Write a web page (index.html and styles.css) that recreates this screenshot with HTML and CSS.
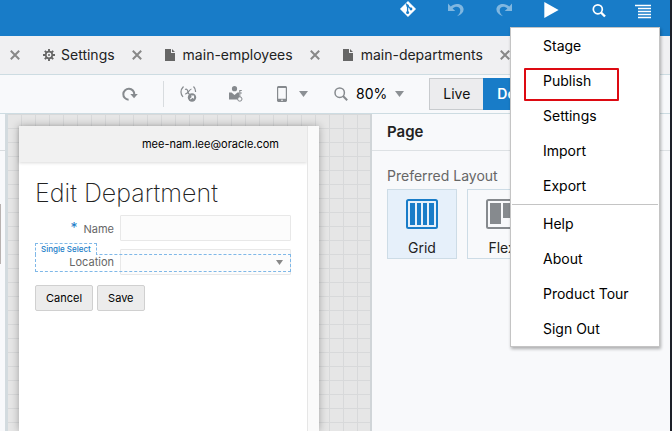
FILE: index.html
```html
<!DOCTYPE html>
<html lang="en">
<head>
<meta charset="utf-8">
<title>Edit Department</title>
<link rel="stylesheet" href="styles.css">
</head>
<body>
<div class="app">
  <header class="topbar">
    <div class="topbar-actions">
      <button class="icon-btn" aria-label="Git"><svg width="16" height="16" viewBox="0 0 16 16"><path d="M8 0.2 15.8 8 8 15.8 0.2 8Z" fill="#fff" stroke="#fff" stroke-width=".4" stroke-linejoin="round"/><path d="M6 2.6 7.6 4.4V11M7.6 4.8 10.8 7.9" fill="none" stroke="#187cc8" stroke-width="1.3"/><circle cx="7.6" cy="11.4" r="1.5" fill="#187cc8"/><circle cx="7.6" cy="4.8" r="1.3" fill="#187cc8"/><circle cx="11" cy="8" r="1.4" fill="#187cc8"/></svg></button>
      <button class="icon-btn faded" aria-label="Undo"><svg width="16" height="16" viewBox="0 0 16 16"><path d="M0 2.5V10h7.3L4.6 7.6C7.500 4.600 12.500 5.500 12.300 9.500C12.200 12 10.800 13.500 9 15.300C13.500 13.800 15.700 11 15.600 8C15.200 2.600 7 1 2.700 5.500Z" fill="#fff"/></svg></button>
      <button class="icon-btn faded" aria-label="Redo"><svg width="16" height="16" viewBox="0 0 16 16"><path transform="translate(16) scale(-1 1)" d="M0 2.500V10h7.300L4.600 7.600C7.500 4.600 12.500 5.500 12.300 9.500C12.200 12 10.800 13.500 9 15.300C13.500 13.800 15.700 11 15.600 8C15.200 2.600 7 1 2.700 5.500Z" fill="#fff"/></svg></button>
      <button class="icon-btn" aria-label="Run"><svg width="16" height="18" viewBox="0 0 16 18"><path d="M.3 1v16L14.600 9Z" fill="#fff"/></svg></button>
      <button class="icon-btn" aria-label="Search"><svg width="16" height="18" viewBox="0 0 16 18"><circle cx="5.800" cy="8.300" r="4.500" fill="none" stroke="#fff" stroke-width="1.700"/><path d="M9 11.500 13 15.500" stroke="#fff" stroke-width="2.400"/></svg></button>
    </div>
    <button class="icon-btn" aria-label="Menu"><svg width="16" height="18" viewBox="0 0 16 18"><path d="M0 4h16M3 7h13M3 10h13M3 13h13M3 16h13" transform="translate(0 .5)" stroke="#fff" stroke-width="1.700"/></svg></button>
  </header>

  <nav class="tabs">
    <button class="close" aria-label="Close tab"><svg width="10" height="10" viewBox="0 0 10 10"><path d="M.8.8 9.200 9.200M9.200.8.8 9.200"/></svg></button>
    <div class="tab"><a href="#settings"><svg class="tab-icon" width="12" height="12" viewBox="0 0 12 12"><circle cx="6" cy="6" r="3.300" fill="none" stroke="#666" stroke-width="1.700"/><circle cx="6" cy="6" r="1" fill="#666"/><path d="M6 0v2.500M6 9.500V12M0 6h2.500M9.500 6H12M1.800 1.800 3.500 3.500M8.500 8.500l1.700 1.700M10.200 1.800 8.500 3.500M3.500 8.500 1.800 10.200" stroke="#666" stroke-width="1.900"/></svg>Settings</a>
      <button class="close" aria-label="Close tab"><svg width="10" height="10" viewBox="0 0 10 10"><path d="M.8.8 9.200 9.200M9.200.8.8 9.200"/></svg></button></div>
    <div class="tab"><a href="#employees"><svg class="tab-icon file" width="10" height="12" viewBox="0 0 10 12"><path d="M0 0h6v4h4v8H0ZM7 0l3 3H7Z" fill="#666"/></svg>main-employees</a>
      <button class="close" aria-label="Close tab"><svg width="10" height="10" viewBox="0 0 10 10"><path d="M.8.8 9.200 9.200M9.200.8.8 9.200"/></svg></button></div>
    <div class="tab"><a href="#departments"><svg class="tab-icon file" width="10" height="12" viewBox="0 0 10 12"><path d="M0 0h6v4h4v8H0ZM7 0l3 3H7Z" fill="#666"/></svg>main-departments</a>
      <button class="close" aria-label="Close tab"><svg width="10" height="10" viewBox="0 0 10 10"><path d="M.8.8 9.200 9.200M9.200.8.8 9.200"/></svg></button></div>
  </nav>

  <div class="toolbar">
    <button class="icon-btn reload" aria-label="Reload"><svg width="16" height="16" viewBox="0 0 16 16"><path d="M6.600 13.700A5.500 5.500 0 1 1 12.300 8.500" fill="none" stroke="#868a8e" stroke-width="2"/><path d="M8.300 8h7.500L12 12.200Z" fill="#868a8e"/></svg></button>
    <div class="tool-group">
      <button class="icon-btn" aria-label="Variables"><svg width="18" height="18" viewBox="0 0 18 18"><path d="M3.500 1.500C.2 5 .2 8.500 3 12M13.500 1.500c1.500 1.500 2.200 3.500 2 5.500M5 4.500c2-1 2.500.5 3 2.500s1 2.500 2 2M11.500 4C9.500 4 7.500 9.500 5 9" fill="none" stroke="#868a8e" stroke-width="1.200"/><circle cx="12" cy="12.500" r="4.200" fill="#868a8e"/><path d="M10.300 14.200l3.200-3.200M11 11h2.500v2.500" fill="none" stroke="#f8f9fb" stroke-width="1.100"/></svg></button>
      <button class="icon-btn" aria-label="User access"><svg width="14" height="18" viewBox="0 0 14 18"><circle cx="5.500" cy="3.700" r="2.600" fill="#868a8e"/><path d="M0 7.500h2.500L5.500 10l3-2.500H10v7H0Z" fill="#868a8e"/><circle cx="10.800" cy="14" r="2.200" fill="#f8f9fb" stroke="#868a8e"/><path d="M10.800 12V5.500h2M10.800 8h2" fill="none" stroke="#868a8e" stroke-width="1.100"/></svg></button>
      <button class="icon-btn device" aria-label="Device"><svg width="10" height="16" viewBox="0 0 10 16"><path d="M1 0h8l1 1v14l-1 1H1l-1-1V1ZM1.200 2v10.700h7.600V2Z" fill-rule="evenodd" fill="#868a8e"/><circle cx="5" cy="14.300" r=".8" fill="#fff"/></svg><svg width="9" height="6" viewBox="0 0 9 6"><path d="M0 0h9L4.500 6Z" fill="#8c9094"/></svg></button>
      <button class="icon-btn zoom"><svg width="14" height="14" viewBox="0 0 14 14"><circle cx="5.700" cy="5.700" r="4.700" fill="none" stroke="#868a8e" stroke-width="1.500"/><path d="M9 9l4.200 4.200" stroke="#868a8e" stroke-width="2"/></svg><span>80%</span><svg width="9" height="6" viewBox="0 0 9 6"><path d="M0 0h9L4.500 6Z" fill="#8c9094"/></svg></button>
    </div>
    <div class="modes"><button class="mode">Live</button><button class="mode active">Design</button></div>
  </div>

  <main class="workspace">
    <aside class="rail"><div class="rail-head"></div><div class="rail-thumb"></div></aside>
    <section class="canvas">
      <div class="device-frame">
        <div class="page">
          <div class="page-top">mee-nam.lee@oracle.com</div>
          <form class="page-body">
            <h1>Edit Department</h1>
            <div class="field">
              <label for="name"><span class="req">*</span>Name</label>
              <input id="name" type="text">
            </div>
            <div class="field">
              <label for="location">Location</label>
              <select id="location"><option></option></select>
              <svg class="caret" width="7" height="5" viewBox="0 0 7 5"><path d="M0 0h7L3.500 5Z" fill="#888"/></svg>
              <span class="select-box"></span>
              <span class="select-tag">Single Select</span>
            </div>
            <div class="buttons"><button type="button">Cancel</button><button type="button">Save</button></div>
          </form>
        </div>
        <div class="scroll-track"></div>
      </div>
    </section>
    <aside class="props">
      <h2>Page</h2>
      <div class="props-body">
        <p>Preferred Layout</p>
        <div class="layouts">
          <button class="layout chosen"><svg width="32" height="30" viewBox="0 0 32 30"><rect x="1" y="1" width="30" height="28" rx="1.500" fill="#e6f0fa" stroke="#187cc8" stroke-width="2"/><path d="M4 4h5v22H4ZM11 4h4v22h-4ZM17 4h4v22h-4ZM23 4h5v22h-5Z" fill="#187cc8"/></svg>Grid</button>
          <button class="layout"><svg width="32" height="30" viewBox="0 0 32 30"><rect x="1" y="1" width="30" height="28" rx="1.500" fill="#f8f9fb" stroke="#868a8e" stroke-width="2"/><path d="M4 4h11v21H4ZM17 4h11v15H17Z" fill="#868a8e"/></svg>Flex</button>
        </div>
      </div>
    </aside>
  </main>

  <div class="menu" role="menu">
    <button role="menuitem">Stage</button>
    <button role="menuitem" class="marked">Publish</button>
    <button role="menuitem">Settings</button>
    <button role="menuitem">Import</button>
    <button role="menuitem">Export</button>
    <hr>
    <button role="menuitem">Help</button>
    <button role="menuitem">About</button>
    <button role="menuitem">Product Tour</button>
    <button role="menuitem">Sign Out</button>
  </div>
</div>
</body>
</html>
```

FILE: styles.css
```css
*, *::after { box-sizing: border-box; }
body {
  margin: 0;
  background: #1d2029;
  color: #222;
  font-family: Inter, "Liberation Sans", sans-serif;
  font-size: 14px;
  line-height: 20px;
}
button, input, select { font: inherit; color: inherit; }
button { margin: 0; padding: 0; border: 0; background: none; }
svg { display: block; flex: none; }
h1, h2, p { margin: 0; }

.app {
  position: relative;
  display: flex;
  flex-direction: column;
  min-height: 100vh;
  margin-right: 2px;
  background: #f8f9fb;
  overflow: hidden;
}

.topbar {
  display: flex;
  justify-content: flex-end;
  align-items: flex-start;
  gap: 27px;
  height: 36px;
  padding: 1px 19px 0 0;
  background: #187cc8;
}
.topbar-actions { display: flex; align-items: flex-start; gap: 32px; }
.icon-btn { display: flex; align-items: center; }
.faded { opacity: .45; }

.tabs {
  display: flex;
  align-items: center;
  gap: 23px;
  height: 39px;
  padding: 0 0 0 10px;
  background: #f0f0f2;
  border-bottom: 1px solid #cddce2;
  overflow: hidden;
  white-space: nowrap;
}
.tab { display: flex; align-items: center; gap: 17px; }
.tab a { display: flex; align-items: center; color: #222; text-decoration: none; }
.tab-icon { margin-right: 6px; }
.tab-icon.file { margin-right: 8px; }
.close svg { fill: none; stroke: #888; stroke-width: 2; }

.toolbar {
  display: flex;
  align-items: center;
  height: 39px;
  padding-left: 122px;
  border-bottom: 1px solid #cddce2;
}
.reload { margin-right: 25px; }
.tool-group {
  display: flex;
  align-items: center;
  height: 26px;
  padding-left: 16px;
  border-left: 1px solid #d8dcdf;
}
.tool-group > :nth-child(2) { margin-left: 31px; }
.device { gap: 12px; margin-left: 34px; }
.zoom { gap: 8px; margin: 0 25px 0 26px; color: #000; }
.modes { display: flex; }
.mode { height: 32px; padding: 0 13px; background: #ececee; border: 1px solid #c8cbce; border-right: 0; color: #111; }
.mode.active { background: #187cc8; border-color: #187cc8; color: #fff; font-weight: 600; }

.workspace { display: flex; flex: 1; }
.rail { width: 8px; border-right: 3px solid #d3dbdf; }
.rail-head { height: 37px; border-bottom: 1px solid #d8dcdf; }
.rail-thumb { width: 1px; height: 60px; margin-top: 53px; background: #b8b2b0; }
.canvas {
  flex: 0 0 362px;
  min-width: 0;
  padding: 12px 51px 0 11px;
  background-color: #e6e6e6;
  background-image:
    linear-gradient(to right, #d8d9da 1px, transparent 1px),
    linear-gradient(to bottom, #d8d9da 1px, transparent 1px);
  background-size: 14px 14px;
  background-position: 13px 0;
}
.device-frame { display: flex; height: 100%; box-shadow: 0 0 8px rgba(0, 0, 0, .3); }
.page { flex: 1; min-width: 0; background: #fff; }
.scroll-track { flex: none; width: 12px; background: #fafafa; border-left: 1px solid #e6e6e6; }
.page-top {
  height: 36px;
  padding-right: 28px;
  background: #f1f1f1;
  box-shadow: 0 1px 3px rgba(0, 0, 0, .15);
  color: #000;
  font-size: 11px;
  line-height: 36px;
  text-align: right;
}
.page-body { padding: 14px 16px 0; }
h1 { font-size: 25px; font-weight: 200; line-height: 34px; white-space: nowrap; }
.field { position: relative; display: flex; align-items: center; margin-top: 8px; }
h1 + .field { margin-top: 5px; }
.field label { flex: none; width: 85px; padding-right: 6px; color: #666; font-size: 11px; text-align: right; }
.req { margin-right: 6px; color: #187cc8; font-size: 14px; }
.field input, .field select {
  flex: 1;
  min-width: 0;
  height: 26px;
  padding: 0 6px;
  border: 1px solid #e8e8e8;
  border-radius: 1px;
  background: #fcfcfc;
  appearance: none;
}
.caret { position: absolute; right: 8px; top: 11px; }
.select-box { position: absolute; left: 0; right: 0; top: 5px; height: 18px; border: 1px dashed #7fb8e8; }
.select-tag {
  position: absolute;
  left: 0;
  top: -6px;
  height: 12px;
  padding: 0 5px;
  border: 1px dashed #7fb8e8;
  border-bottom: 0;
  background: #fff;
  color: #187cc8;
  font-size: 8px;
  font-weight: 500;
  line-height: 11px;
}
.buttons { display: flex; gap: 4px; margin-top: 10px; }
.buttons button {
  height: 26px;
  padding: 0 10px;
  border: 1px solid #d0d0d0;
  border-radius: 2px;
  background: #ececec;
  color: #000;
  font-size: 11px;
}

.props { flex: 1; border-left: 2px solid #d0d5d8; }
.props h2 { height: 37px; padding-left: 15px; border-bottom: 1px solid #dde1e4; font-size: 15px; font-weight: 600; line-height: 36px; }
.props-body { padding: 15px 15px 0; }
.props p { color: #666; }
.layouts { display: flex; gap: 10px; margin-top: 3px; }
.layout {
  display: flex;
  flex-direction: column;
  align-items: center;
  gap: 9px;
  width: 70px;
  height: 70px;
  padding-top: 9px;
  border: 1px solid #cddce6;
}
.layout.chosen { background: #e6f0fa; }

.menu {
  position: absolute;
  top: 27px;
  right: 10px;
  width: 150px;
  padding: 0 1px;
  background: #fff;
  border: 1px solid #c4c4c4;
  box-shadow: 1px 2px 3px rgba(0, 0, 0, .3);
}
.menu button { position: relative; display: block; width: 100%; height: 35px; padding-left: 31px; color: #000; text-align: left; }
.menu hr { height: 1px; margin: 1px 0; border: 0; background: #c4c4c4; }
.marked::after { content: ""; position: absolute; left: 12px; top: 5px; width: 95px; height: 33px; border: 2px solid #dd0a12; border-radius: 1px; }
```
